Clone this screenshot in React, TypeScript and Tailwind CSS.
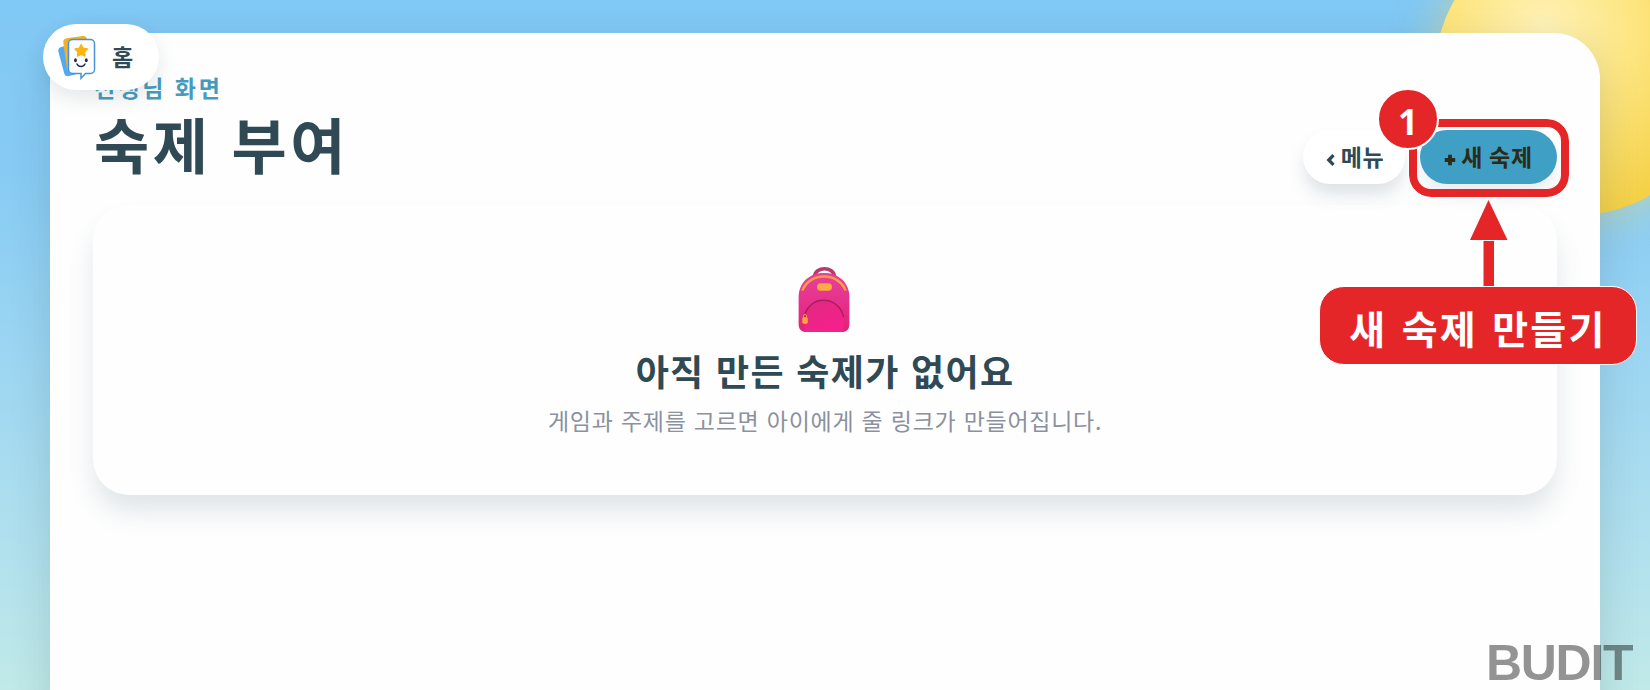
const App = () => {
  return (
    <div className="relative h-[690px] w-[1650px] overflow-hidden bg-[linear-gradient(180deg,#80c8f5_0%,#87cbf4_25%,#9bd5f2_50%,#b0e0ee_78%,#c0e9e8_100%)] px-[50px] pt-[33px] font-['Noto_Sans_CJK_KR',sans-serif] text-[#2f4a54]">
      <Sun />
      <main className="relative h-[720px] rounded-t-[46px] bg-[#fefefe] px-[43px] pt-[42px] shadow-[0_14px_40px_rgba(47,74,84,0.18)]">
        <header className="flex h-[130px] items-start justify-between">
          <div className="flex flex-col">
            <span className="mt-[-2px] ml-px text-[23px] leading-[28px] font-bold tracking-[3px] text-[#459bbd]">
              선생님 화면
            </span>
            <h1 className="mt-[6px] ml-px text-[60px] leading-[72px] font-bold tracking-[3.5px] [word-spacing:3px]">
              숙제 부여
            </h1>
          </div>
          <div className="mt-[55px] flex gap-[15px] text-[23px] font-bold tracking-[0.7px]">
            <button className="flex h-[54px] w-[102px] items-center justify-center rounded-full bg-white pb-[2px] pl-[2px] shadow-[0_12px_18px_-2px_rgba(47,84,104,0.17)]">
              <ChevronMark />
              메뉴
            </button>
            <NewHomeworkButton />
          </div>
        </header>
        <EmptyCard />
      </main>
      <HomePill />
      <Callout />
      <div className="absolute top-[635px] left-[1486px] font-['Liberation_Sans',sans-serif] text-[50px] leading-[56px] font-bold tracking-[-1.3px] text-black/42">
        BUDIT
      </div>
    </div>
  )
}

const Sun = () => (
  <div className="absolute top-[-71px] left-[1435px] size-[286px] rounded-full bg-[radial-gradient(circle_at_38%_35%,#fff2b8_0%,#fde57f_36%,#f5d147_75%,#f3cc3c_100%)] shadow-[0_0_44px_rgba(255,218,90,0.5)]" />
)

const ChevronMark = () => (
  <svg className="mt-[8px] mr-[6px]" width="9" height="12" viewBox="0 0 9 12">
    <path d="M7.500 1.200 2.800 6 7.500 10.800" fill="none" stroke="#2f4a54" strokeWidth="3.300" />
  </svg>
)

const NewHomeworkButton = () => (
  <button className="flex h-[54px] w-[137px] items-center justify-center rounded-full bg-[#409fc5] pb-[2px] text-[#2c2c16] shadow-[0_12px_18px_-2px_rgba(47,84,104,0.1)]">
    <svg className="mt-[8px] mr-[5px]" width="12" height="12" viewBox="0 0 12 12">
      <path d="M6 .8v10.400M.8 6h10.400" stroke="#2c2c16" strokeWidth="3.800" />
    </svg>
    새 숙제
  </button>
)

const HomePill = () => (
  <div className="absolute top-[24px] left-[43px] flex h-[66px] w-[116px] items-center rounded-full bg-white pl-[15px] shadow-[0_8px_20px_rgba(47,74,84,0.13)]">
    <svg width="38" height="46" viewBox="0 0 38 46">
      <rect x="3" y="11" width="20" height="30" rx="4" fill="#54aaf0" transform="rotate(-15 13 26)" />
      <rect x="7" y="3" width="24" height="33" rx="4" fill="#efb02a" transform="rotate(-8 19 20)" />
      <path
        d="M14.500 5.500h18a4 4 0 0 1 4 4v26a4 4 0 0 1-4 4h-5l-4.500 4.800v-4.800h-8.500a4 4 0 0 1-4-4v-26a4 4 0 0 1 4-4Z"
        fill="#fff"
        stroke="#4893d8"
        strokeWidth="1.500"
      />
      <path
        d="m23.200 10.500 2 3.700 4.200.8-2.900 3 .5 4.200-3.800-1.800-3.800 1.800.5-4.200-2.900-3 4.200-.8Z"
        fill="#f9b514"
        stroke="#f9b514"
        strokeWidth="1.300"
        strokeLinejoin="round"
      />
      <ellipse cx="17.500" cy="26.300" rx="1.400" ry="2" fill="#1c2a5c" />
      <ellipse cx="28.300" cy="26.300" rx="1.400" ry="2" fill="#1c2a5c" />
      <path d="M19 30c1.500 3.300 6.500 3.300 8 0" fill="none" stroke="#1c2a5c" strokeWidth="1.500" strokeLinecap="round" />
    </svg>
    <span className="mt-[-3px] ml-[16px] text-[23px] leading-[32px] font-bold">홈</span>
  </div>
)

const EmptyCard = () => (
  <section className="flex h-[290px] flex-col items-center rounded-[36px] bg-[#fefefe] pt-[61px] shadow-[0_18px_28px_-3px_rgba(47,84,104,0.16)]">
    <Backpack />
    <h2 className="mt-[10px] text-[36px] leading-[54px] font-bold tracking-[1.3px] [word-spacing:2px]">
      아직 만든 숙제가 없어요
    </h2>
    <p className="mt-[7px] text-[23px] leading-[32px] tracking-[0.7px] text-[#8b919d] [word-spacing:1.500px]">
      게임과 주제를 고르면 아이에게 줄 링크가 만들어집니다.
    </p>
  </section>
)

const Backpack = () => (
  <svg className="mr-[2px] shrink-0" width="54" height="67" viewBox="0 0 54 68">
    <defs>
      <linearGradient id="bag" x1="0" y1="0" x2="0" y2="1">
        <stop offset="0" stopColor="#e8459a" />
        <stop offset="0.6" stopColor="#e52f8a" />
        <stop offset="1" stopColor="#df2372" />
      </linearGradient>
      <linearGradient id="pocket" x1="0" y1="0" x2="0.6" y2="1">
        <stop offset="0" stopColor="#dd2a80" />
        <stop offset="1" stopColor="#f7208c" />
      </linearGradient>
      <clipPath id="bagShape">
        <path d="M1 33C1 17 12 7 27 7s26 10 26 26v25c0 6-3 9-9 9H10c-6 0-9-3-9-9Z" />
      </clipPath>
    </defs>
    <path d="M17.500 13V11c0-11 20-11 20 0v2" fill="none" stroke="#b83a68" strokeWidth="3.600" />
    <g clipPath="url(#bagShape)">
      <rect width="54" height="68" fill="url(#bag)" />
      <path d="M5 25C12 6 42 6 49 25" fill="none" stroke="#fa9c46" strokeWidth="2.600" />
      <path d="M7 68V52C11 29 42 29 47 52v16" fill="url(#pocket)" />
      <path d="M7 52C11 29 42 29 47 52" fill="none" stroke="#ab1c60" strokeWidth="1.500" />
    </g>
    <rect x="20" y="17.500" width="15" height="7.500" rx="3.500" fill="#ffab42" />
    <rect x="5" y="52" width="5.500" height="6.500" rx="1.500" fill="#ffa63d" />
    <path d="M6.300 52v-2q1.500-2 3 0v2" fill="none" stroke="#ffa63d" />
  </svg>
)

// red annotation drawn over the page: frame, step number, arrow and label
const Callout = () => (
  <>
    <div className="absolute top-[119px] left-[1409px] h-[78px] w-[160px] rounded-[22px] border-8 border-[#e52629] outline-1 outline-white/80" />
    <div className="absolute top-[88px] left-[1377px] flex size-[62px] items-center justify-center rounded-full border-2 border-white bg-[#e52629] pt-[4px] font-['Open_Sans',sans-serif] text-[35px] leading-none font-bold text-white">
      1
    </div>
    <svg className="absolute top-[199px] left-[1469px]" width="40" height="88" viewBox="0 0 40 88">
      <path d="M19.500 1 38.500 41H1Z" fill="#e52629" />
      <path d="M14.500 42h10.500v45H14.500Z" fill="#e52629" />
    </svg>
    <div className="absolute top-[286px] left-[1319px] flex h-[79px] w-[318px] items-center justify-center rounded-[25px] border border-white bg-[#e52629] pt-[3px] text-[39px] leading-none font-bold tracking-[2.3px] text-white [word-spacing:3px]">
      새 숙제 만들기
    </div>
  </>
)

export default App
